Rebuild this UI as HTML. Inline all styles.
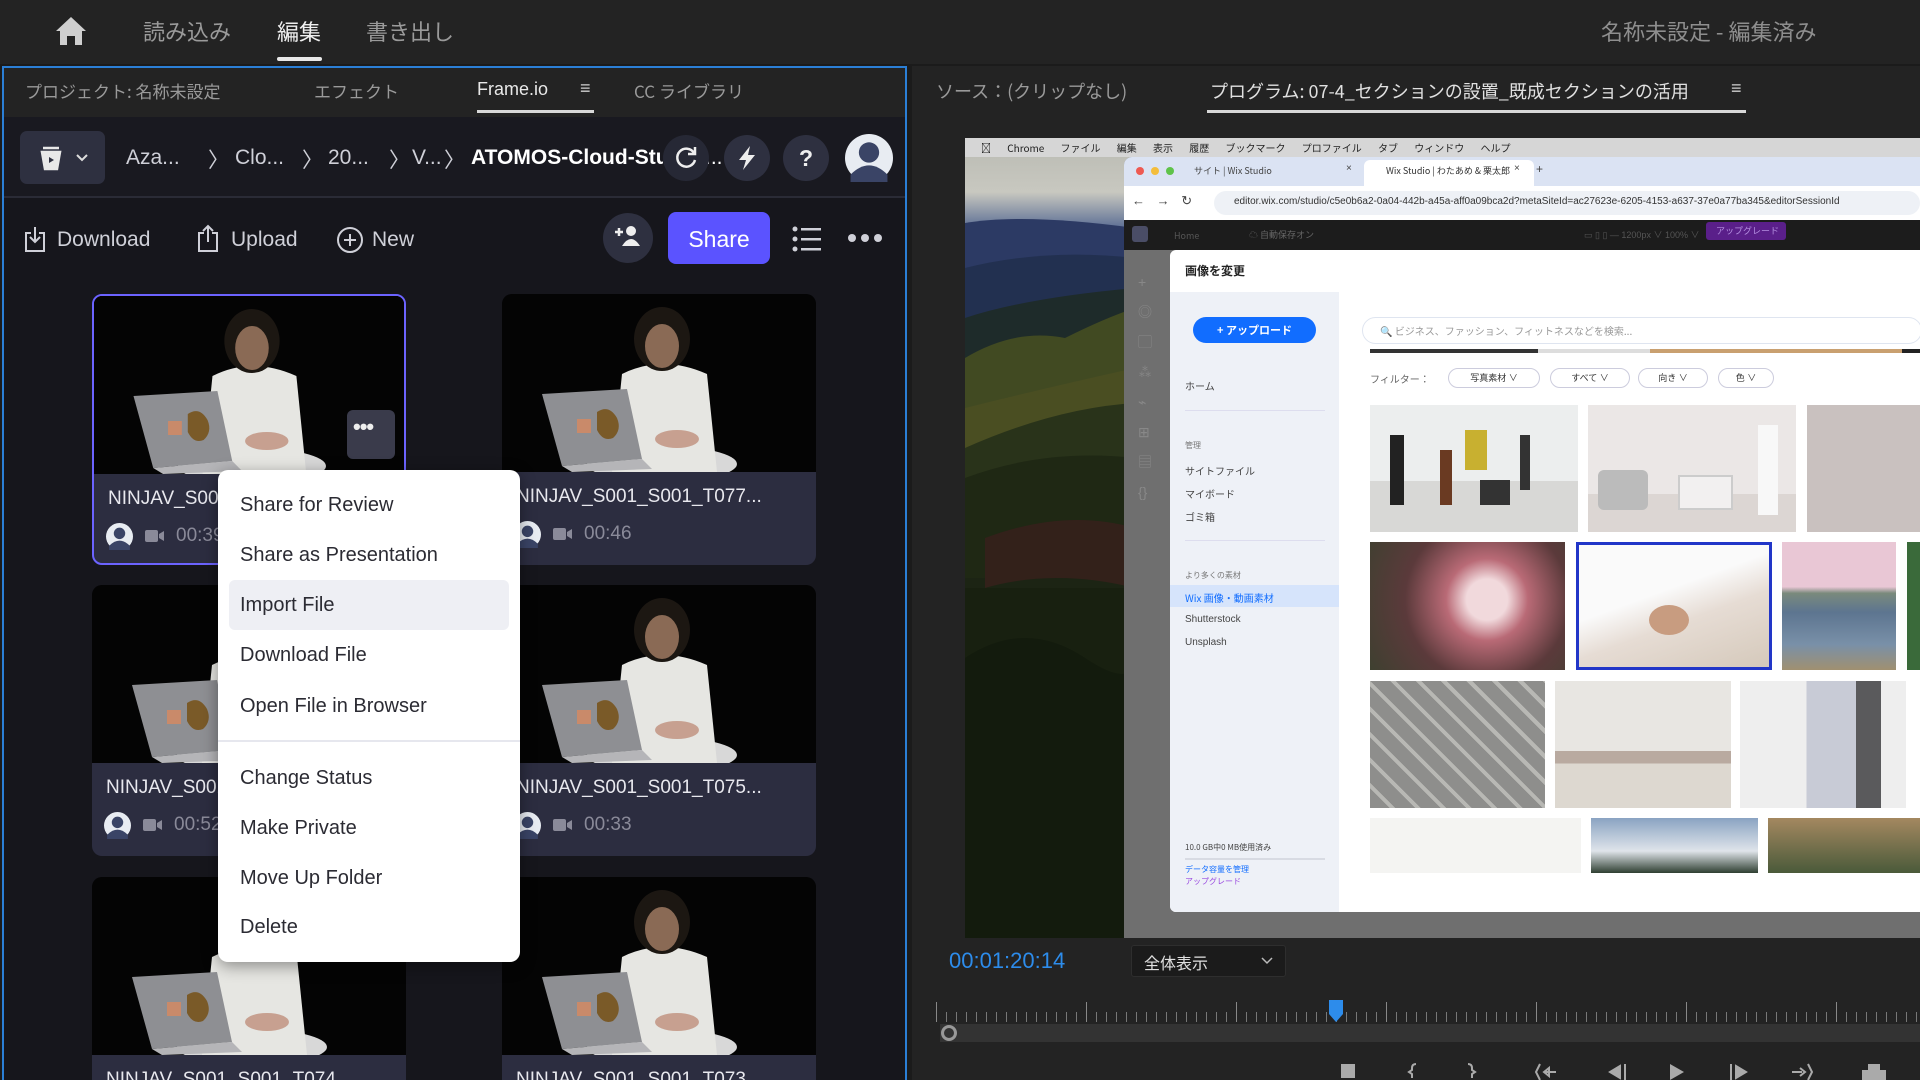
<!DOCTYPE html>
<html><head><meta charset="utf-8">
<style>
*{margin:0;padding:0;box-sizing:border-box}
html,body{width:1920px;height:1080px;overflow:hidden}
body{background:#1b1b1b;font-family:"Liberation Sans","Noto Sans CJK JP",sans-serif;position:relative}
.a{position:absolute}
.t{position:absolute;white-space:nowrap}
.jp{font-family:"Noto Sans CJK JP","Liberation Sans",sans-serif}
.card{position:absolute;width:314px;height:271px;border-radius:10px;overflow:hidden;background:#2c2d40}
.card .th{position:absolute;left:0;top:0;width:100%;height:178px;background:#050505}
.card .nm{position:absolute;left:14px;top:192px;font-size:19px;color:#e8e8ee;white-space:nowrap}
.mi{position:absolute;left:22px;font-size:20px;color:#2b2b33;white-space:nowrap}
.circ{position:absolute;width:46px;height:46px;border-radius:50%;background:#2e3040}
.img{position:absolute}
.side{position:absolute;left:15px;font-size:10px;color:#444;white-space:nowrap}
</style></head><body>
<svg width="0" height="0" style="position:absolute">
<defs>
<symbol id="th" viewBox="0 0 314 178">
<rect width="314" height="178" fill="#040404"/>
<ellipse cx="160" cy="170" rx="75" ry="18" fill="#d8d8d8"/>
<path d="M110 178 L120 80 Q160 60 205 80 L215 178 Z" fill="#e6e6e2"/>
<ellipse cx="160" cy="45" rx="28" ry="32" fill="#1c1712"/>
<ellipse cx="160" cy="52" rx="17" ry="22" fill="#8a6a55"/>
<path d="M40 100 L125 95 L140 165 L60 172 Z" fill="#8e8f93"/>
<path d="M60 172 L140 165 L150 175 L70 178 Z" fill="#b5b5b8"/>
<rect x="75" y="125" width="14" height="14" fill="#c98a6a"/>
<path d="M95 118 q12 -8 20 6 q5 12 -4 20 q-10 4 -16 -8 z" fill="#7a5a28"/>
<ellipse cx="175" cy="145" rx="22" ry="9" fill="#c7a090"/>
</symbol>
<symbol id="av" viewBox="0 0 26 26">
<circle cx="13" cy="13" r="13" fill="#e8ecf2"/>
<circle cx="13" cy="10" r="5.5" fill="#3a4466"/>
<path d="M3 22 q10 -10 20 0 v4 h-20z" fill="#3a4466"/>
</symbol>
<symbol id="cam" viewBox="0 0 20 14"><rect x="0" y="1" width="13" height="12" rx="2" fill="#8a8a99"/><path d="M14 5 L19 2 V12 L14 9Z" fill="#8a8a99"/></symbol>
</defs></svg>

<div class="a" style="left:0;top:0;width:1920px;height:64px;background:#232323"></div>
<svg class="a" style="left:55px;top:16px" width="32" height="30" viewBox="0 0 32 30"><path d="M16 1 L31 15 H27 V29 H20 V20 H12 V29 H5 V15 H1 Z" fill="#cfcfcf"/></svg>
<div class="t jp" style="left:143px;top:15px;font-size:22px;color:#9a9a9a">読み込み</div>
<div class="t jp" style="left:277px;top:15px;font-size:22px;color:#f0f0f0">編集</div>
<div class="a" style="left:277px;top:57px;width:45px;height:4px;background:#e8e8e8;border-radius:2px"></div>
<div class="t jp" style="left:366px;top:15px;font-size:22px;color:#9a9a9a">書き出し</div>
<div class="t jp" style="left:1601px;top:15px;font-size:22px;color:#8e8e8e">名称未設定 - 編集済み</div>

<div class="a" style="left:2px;top:66px;width:905px;height:1014px;background:#16161c;border:2px solid #2b7fd6;border-bottom:none;overflow:hidden">
<div class="a" style="left:0;top:0;width:901px;height:49px;background:#232323"></div>
<div class="t jp" style="left:21px;top:10px;font-size:17px;color:#9a9a9a">プロジェクト: 名称未設定</div>
<div class="t jp" style="left:310px;top:10px;font-size:17px;color:#9a9a9a">エフェクト</div>
<div class="t" style="left:473px;top:11px;font-size:18px;color:#e8e8e8">Frame.io</div>
<div class="t" style="left:576px;top:10px;font-size:18px;color:#cfcfcf">≡</div>
<div class="a" style="left:473px;top:42px;width:117px;height:3px;background:#d8d8d8"></div>
<div class="t jp" style="left:630px;top:10px;font-size:17px;color:#9a9a9a">CC ライブラリ</div>

<div class="a" style="left:0;top:49px;width:901px;height:80px;background:#191920"></div>
<div class="a" style="left:16px;top:63px;width:85px;height:53px;background:#2e3040;border-radius:7px"></div>
<svg class="a" style="left:36px;top:77px" width="50" height="26" viewBox="0 0 50 26"><path d="M3 3 h16 M2 7 h18 L17 24 h-12 Z" stroke="#e8e8e8" stroke-width="2.5" fill="#e8e8e8"/><path d="M9 12 l5 3 l-5 3z" fill="#2e3040"/><path d="M37 10 l5 5 l5 -5" stroke="#ddd" stroke-width="2" fill="none"/></svg>
<div class="t" style="left:122px;top:78px;font-size:21px;color:#cfd0d8">Aza...</div>
<div class="t" style="left:204px;top:76px;font-size:21px;color:#cfd0d8">〉</div>
<div class="t" style="left:231px;top:78px;font-size:21px;color:#cfd0d8">Clo...</div>
<div class="t" style="left:298px;top:76px;font-size:21px;color:#cfd0d8">〉</div>
<div class="t" style="left:324px;top:78px;font-size:21px;color:#cfd0d8">20...</div>
<div class="t" style="left:385px;top:76px;font-size:21px;color:#cfd0d8">〉</div>
<div class="t" style="left:408px;top:78px;font-size:21px;color:#cfd0d8">V...</div>
<div class="t" style="left:440px;top:76px;font-size:21px;color:#cfd0d8">〉</div>
<div class="t" style="left:467px;top:78px;font-size:21px;color:#fff;font-weight:bold;width:192px;overflow:hidden">ATOMOS-Cloud-Studio</div>
<div class="t" style="left:701px;top:78px;font-size:21px;color:#fff">...</div>
<div class="circ" style="left:659px;top:67px;background:#262835"></div>
<svg class="a" style="left:669px;top:77px" width="26" height="26" viewBox="0 0 26 26"><path d="M21 8 A9 9 0 1 0 22 15" stroke="#eee" stroke-width="2.5" fill="none"/><path d="M22 2 v7 h-7" stroke="#eee" stroke-width="2.5" fill="none"/></svg>
<div class="circ" style="left:720px;top:67px"></div>
<svg class="a" style="left:731px;top:77px" width="24" height="26" viewBox="0 0 24 26"><path d="M15 1 L4 15 H11 L8 25 L20 10 H13 Z" fill="#eee"/></svg>
<div class="circ" style="left:779px;top:67px"></div>
<div class="t" style="left:795px;top:77px;font-size:23px;color:#eee;font-weight:bold">?</div>
<svg class="a" style="left:841px;top:66px" width="48" height="48" viewBox="0 0 26 26"><use href="#av"/></svg>
<div class="a" style="left:0;top:128px;width:901px;height:2px;background:#2a2b36"></div>

<svg class="a" style="left:19px;top:157px" width="24" height="28" viewBox="0 0 24 28"><path d="M8 8 H3 V26 H21 V8 H16 M12 2 V17 M7 12 l5 5 l5 -5" stroke="#cfd0d8" stroke-width="2" fill="none"/></svg>
<div class="t" style="left:53px;top:160px;font-size:21px;color:#cfd0d8">Download</div>
<svg class="a" style="left:192px;top:155px" width="24" height="30" viewBox="0 0 24 30"><path d="M8 10 H3 V28 H21 V10 H16 M12 19 V3 M7 8 l5 -5 l5 5" stroke="#cfd0d8" stroke-width="2" fill="none"/></svg>
<div class="t" style="left:227px;top:160px;font-size:21px;color:#cfd0d8">Upload</div>
<svg class="a" style="left:332px;top:158px" width="28" height="28" viewBox="0 0 28 28"><circle cx="14" cy="14" r="12" stroke="#cfd0d8" stroke-width="2" fill="none"/><path d="M14 8 V20 M8 14 H20" stroke="#cfd0d8" stroke-width="2"/></svg>
<div class="t" style="left:368px;top:160px;font-size:21px;color:#cfd0d8">New</div>
<div class="a" style="left:599px;top:145px;width:50px;height:50px;border-radius:50%;background:#2e3040"></div>
<svg class="a" style="left:609px;top:154px" width="30" height="30" viewBox="0 0 30 30"><circle cx="18" cy="9" r="5" fill="#eee"/><path d="M9 24 q9 -14 18 0z" fill="#eee"/><path d="M6 6 V14 M2 10 H10" stroke="#eee" stroke-width="2.5"/></svg>
<div class="a" style="left:664px;top:144px;width:102px;height:52px;border-radius:8px;background:#5b53ff"></div>
<div class="t" style="left:664px;top:158px;width:102px;text-align:center;font-size:23px;color:#fff">Share</div>
<svg class="a" style="left:788px;top:158px" width="30" height="26" viewBox="0 0 30 26"><g fill="#cfd0d8"><circle cx="3" cy="3" r="2.5"/><circle cx="3" cy="13" r="2.5"/><circle cx="3" cy="23" r="2.5"/><rect x="9" y="2" width="20" height="2.5"/><rect x="9" y="12" width="20" height="2.5"/><rect x="9" y="22" width="20" height="2.5"/></g></svg>
<svg class="a" style="left:844px;top:165px" width="34" height="10" viewBox="0 0 34 10"><g fill="#cfd0d8"><circle cx="4" cy="5" r="4"/><circle cx="17" cy="5" r="4"/><circle cx="30" cy="5" r="4"/></g></svg>

<div class="card" style="left:88px;top:226px;border:2px solid #6c63ff"><svg class="th" viewBox="0 0 314 178" preserveAspectRatio="none"><use href="#th"/></svg><div class="nm">NINJAV_S001_S001_T078...</div><svg class="a" style="left:12px;top:227px" width="27" height="27"><use href="#av"/></svg><svg class="a" style="left:51px;top:233px" width="20" height="14"><use href="#cam"/></svg><div class="t" style="left:82px;top:229px;font-size:19px;color:#8a8a99">00:39</div>
<div class="a" style="left:253px;top:114px;width:48px;height:49px;background:#3a3b4b;border-radius:6px"></div><div class="t" style="left:259px;top:118px;font-size:22px;color:#eee;font-weight:bold;letter-spacing:-1px">•••</div></div>
<div class="card" style="left:498px;top:226px"><svg class="th" viewBox="0 0 314 178" preserveAspectRatio="none"><use href="#th"/></svg><div class="nm">NINJAV_S001_S001_T077...</div><svg class="a" style="left:12px;top:227px" width="27" height="27"><use href="#av"/></svg><svg class="a" style="left:51px;top:233px" width="20" height="14"><use href="#cam"/></svg><div class="t" style="left:82px;top:229px;font-size:19px;color:#8a8a99">00:46</div></div>
<div class="card" style="left:88px;top:517px"><svg class="th" viewBox="0 0 314 178" preserveAspectRatio="none"><use href="#th"/></svg><div class="nm">NINJAV_S001_S001_T076...</div><svg class="a" style="left:12px;top:227px" width="27" height="27"><use href="#av"/></svg><svg class="a" style="left:51px;top:233px" width="20" height="14"><use href="#cam"/></svg><div class="t" style="left:82px;top:229px;font-size:19px;color:#8a8a99">00:52</div></div>
<div class="card" style="left:498px;top:517px"><svg class="th" viewBox="0 0 314 178" preserveAspectRatio="none"><use href="#th"/></svg><div class="nm">NINJAV_S001_S001_T075...</div><svg class="a" style="left:12px;top:227px" width="27" height="27"><use href="#av"/></svg><svg class="a" style="left:51px;top:233px" width="20" height="14"><use href="#cam"/></svg><div class="t" style="left:82px;top:229px;font-size:19px;color:#8a8a99">00:33</div></div>
<div class="card" style="left:88px;top:809px;height:205px;border-radius:10px 10px 0 0"><svg class="th" viewBox="0 0 314 178" preserveAspectRatio="none"><use href="#th"/></svg><div class="nm">NINJAV_S001_S001_T074...</div></div>
<div class="card" style="left:498px;top:809px;height:205px;border-radius:10px 10px 0 0"><svg class="th" viewBox="0 0 314 178" preserveAspectRatio="none"><use href="#th"/></svg><div class="nm">NINJAV_S001_S001_T073...</div></div>
</div>

<div class="a" style="left:218px;top:470px;width:302px;height:492px;background:#fff;border-radius:10px;box-shadow:0 4px 16px rgba(0,0,0,.4)">
<div class="a" style="left:11px;top:110px;width:280px;height:50px;background:#eeeff4;border-radius:6px"></div>
<div class="mi" style="top:24px">Share for Review</div>
<div class="mi" style="top:74px">Share as Presentation</div>
<div class="mi" style="top:124px">Import File</div>
<div class="mi" style="top:174px">Download File</div>
<div class="mi" style="top:225px">Open File in Browser</div>
<div class="a" style="left:0;top:270px;width:302px;height:2px;background:#e6e7ee"></div>
<div class="mi" style="top:297px">Change Status</div>
<div class="mi" style="top:347px">Make Private</div>
<div class="mi" style="top:397px">Move Up Folder</div>
<div class="mi" style="top:446px">Delete</div>
</div>

<div class="a" style="left:912px;top:66px;width:1008px;height:1014px;background:#232323"></div>
<div class="t jp" style="left:936px;top:78px;font-size:18px;color:#9a9a9a">ソース：(クリップなし)</div>
<div class="t jp" style="left:1210px;top:78px;font-size:18px;color:#e0e0e0">プログラム:  07-4_セクションの設置_既成セクションの活用</div>
<div class="t" style="left:1731px;top:78px;font-size:18px;color:#cfcfcf">≡</div>
<div class="a" style="left:1207px;top:110px;width:539px;height:3px;background:#d8d8d8"></div>

<div class="a" style="left:965px;top:138px;width:955px;height:800px;overflow:hidden;background:#111">
 <svg class="a" style="left:0;top:0" width="170" height="800" viewBox="0 0 170 800">
  <defs><linearGradient id="sky" x1="0" y1="0" x2="0" y2="1"><stop offset="0" stop-color="#b9bab2"/><stop offset=".6" stop-color="#c8c8c0"/><stop offset="1" stop-color="#5d6f95"/></linearGradient></defs>
  <rect width="170" height="800" fill="#1c2414"/>
  <rect width="170" height="90" fill="url(#sky)"/>
  <path d="M0 85 Q60 75 170 90 V200 H0Z" fill="#2c3a64"/>
  <path d="M0 130 Q80 110 170 120 V260 H0Z" fill="#223050"/>
  <path d="M0 180 Q60 160 170 150 V330 H0Z" fill="#1e2b2a"/>
  <path d="M0 220 Q50 190 100 200 Q140 180 170 170 V330 H0Z" fill="#414a22"/>
  <path d="M0 270 Q80 250 170 230 V330 H0Z" fill="#4a4e22"/>
  <path d="M0 310 Q90 270 170 265 V370 H0Z" fill="#29331a"/>
  <path d="M0 340 Q80 310 170 320 V440 H0Z" fill="#1f2814"/>
  <path d="M20 400 Q100 370 170 390 V450 Q90 430 20 450Z" fill="#33211a"/>
  <rect y="450" width="170" height="350" fill="#182010"/>
  <path d="M0 520 Q60 480 120 520 T170 500 V800 H0Z" fill="#131b0d"/>
 </svg>
 <div class="a" style="left:0;top:0;width:955px;height:19px;background:#d6d6d6"></div>
 <div class="t jp" style="left:16px;top:2px;font-size:10px;color:#222;word-spacing:14px">&#63743; Chrome ファイル 編集 表示 履歴 ブックマーク プロファイル タブ ウィンドウ ヘルプ</div>
 <div class="a" style="left:159px;top:19px;width:796px;height:781px;background:#6f6f6f;border-radius:8px 0 0 0;overflow:hidden">
  <div class="a" style="left:0;top:0;width:796px;height:29px;background:#dbe3f3"></div>
  <div class="a" style="left:12px;top:10px;width:8px;height:8px;border-radius:50%;background:#ee5a52"></div>
  <div class="a" style="left:27px;top:10px;width:8px;height:8px;border-radius:50%;background:#f4bd3b"></div>
  <div class="a" style="left:42px;top:10px;width:8px;height:8px;border-radius:50%;background:#5fc34a"></div>
  <div class="t jp" style="left:70px;top:7px;font-size:9px;color:#444">サイト | Wix Studio</div>
  <div class="t" style="left:222px;top:6px;font-size:10px;color:#444">×</div>
  <div class="a" style="left:240px;top:3px;width:170px;height:26px;background:#fff;border-radius:6px 6px 0 0"></div>
  <div class="t jp" style="left:262px;top:7px;font-size:9px;color:#333">Wix Studio | わたあめ &amp; 栗太郎</div>
  <div class="t" style="left:390px;top:6px;font-size:10px;color:#444">×</div>
  <div class="t" style="left:412px;top:5px;font-size:12px;color:#444">+</div>
  <div class="a" style="left:0;top:29px;width:796px;height:34px;background:#fff"></div>
  <div class="t" style="left:8px;top:36px;font-size:13px;color:#444;word-spacing:8px">← → ↻</div>
  <div class="a" style="left:90px;top:34px;width:706px;height:24px;background:#eef1f6;border-radius:12px"></div>
  <div class="t" style="left:110px;top:39px;font-size:10px;color:#333">editor.wix.com/studio/c5e0b6a2-0a04-442b-a45a-aff0a09bca2d?metaSiteId=ac27623e-6205-4153-a637-37e0a77ba345&amp;editorSessionId</div>
  <div class="a" style="left:0;top:63px;width:796px;height:30px;background:#1c1c1c"></div>
  <div class="a" style="left:8px;top:69px;width:16px;height:16px;border-radius:3px;background:#4a4d66"></div>
  <div class="t jp" style="left:50px;top:72px;font-size:9px;color:#555">Home</div>
  <div class="t jp" style="left:125px;top:71px;font-size:9px;color:#666">☁ 自動保存オン</div>
  <div class="t" style="left:460px;top:71px;font-size:9px;color:#555">▭ ▯ ▯ — 1200px ∨ 100% ∨</div>
  <div class="a" style="left:582px;top:65px;width:80px;height:18px;background:#5a1f8a;border-radius:3px"></div>
  <div class="t jp" style="left:592px;top:67px;font-size:9px;color:#b48ee0">アップグレード</div>
  <div class="t" style="left:14px;top:110px;font-size:14px;color:#888;line-height:30px">+<br>◎<br>▢<br>⁂<br>⌁<br>⊞<br>▤<br>{}</div>
  <div class="a" style="left:46px;top:93px;width:750px;height:662px;background:#fff;border-radius:6px 0 0 6px;overflow:hidden">
   <div class="t jp" style="left:15px;top:12px;font-size:12px;color:#222;font-weight:bold">画像を変更</div>
   <div class="a" style="left:0;top:42px;width:169px;height:620px;background:#eef1f7"></div>
   <div class="a" style="left:23px;top:67px;width:123px;height:26px;background:#116dff;border-radius:13px"></div>
   <div class="t jp" style="left:23px;top:72px;width:123px;text-align:center;font-size:11px;color:#fff;font-weight:bold">+ アップロード</div>
   <div class="side jp" style="top:128px">ホーム</div>
   <div class="a" style="left:15px;top:160px;width:140px;height:1px;background:#dde"></div>
   <div class="side jp" style="top:190px;font-size:8px;color:#777">管理</div>
   <div class="side jp" style="top:213px">サイトファイル</div>
   <div class="side jp" style="top:236px">マイボード</div>
   <div class="side jp" style="top:259px">ゴミ箱</div>
   <div class="a" style="left:15px;top:290px;width:140px;height:1px;background:#dde"></div>
   <div class="side jp" style="top:320px;font-size:8px;color:#777">より多くの素材</div>
   <div class="a" style="left:0;top:335px;width:169px;height:22px;background:#d6e4fb"></div>
   <div class="side jp" style="top:340px;color:#116dff">Wix 画像・動画素材</div>
   <div class="side" style="top:364px">Shutterstock</div>
   <div class="side" style="top:387px">Unsplash</div>
   <div class="side jp" style="top:592px;font-size:8px">10.0 GB中0 MB使用済み</div>
   <div class="a" style="left:15px;top:608px;width:140px;height:2px;background:#d8dbe3"></div>
   <div class="side jp" style="top:614px;font-size:8px;color:#116dff">データ容量を管理</div>
   <div class="side jp" style="top:626px;font-size:8px;color:#9a4be0">アップグレード</div>
   <div class="a" style="left:192px;top:67px;width:560px;height:27px;border:1px solid #dfe5f0;border-radius:14px"></div>
   <div class="t jp" style="left:210px;top:73px;font-size:10px;color:#999">🔍 ビジネス、ファッション、フィットネスなどを検索...</div>
   <div class="a" style="left:200px;top:99px;width:560px;height:4px;background:linear-gradient(90deg,#333 0 30%,#ddd 30% 50%,#c9a070 50% 95%,#222 95%)"></div>
   <div class="t jp" style="left:200px;top:121px;font-size:10px;color:#666">フィルター：</div>
   <div class="a" style="left:278px;top:118px;width:92px;height:20px;border:1px solid #ccd;border-radius:10px;font-size:9px;color:#333;text-align:center;line-height:18px">写真素材 ∨</div>
   <div class="a" style="left:380px;top:118px;width:80px;height:20px;border:1px solid #ccd;border-radius:10px;font-size:9px;color:#333;text-align:center;line-height:18px">すべて ∨</div>
   <div class="a" style="left:468px;top:118px;width:70px;height:20px;border:1px solid #ccd;border-radius:10px;font-size:9px;color:#333;text-align:center;line-height:18px">向き ∨</div>
   <div class="a" style="left:548px;top:118px;width:56px;height:20px;border:1px solid #ccd;border-radius:10px;font-size:9px;color:#333;text-align:center;line-height:18px">色 ∨</div>
   <div class="img" style="left:200px;top:155px;width:208px;height:127px;background:linear-gradient(180deg,#eceeee 0 60%,#d8d8d6 60%)"><div class="a" style="left:20px;top:30px;width:14px;height:70px;background:#222"></div><div class="a" style="left:70px;top:45px;width:12px;height:55px;background:#6a3a22"></div><div class="a" style="left:95px;top:25px;width:22px;height:40px;background:#c8b030"></div><div class="a" style="left:110px;top:75px;width:30px;height:25px;background:#333"></div><div class="a" style="left:150px;top:30px;width:10px;height:55px;background:#333"></div></div>
   <div class="img" style="left:418px;top:155px;width:208px;height:127px;background:linear-gradient(180deg,#ebe7e6 0 70%,#dcd6d3 70%)"><div class="a" style="left:10px;top:65px;width:50px;height:40px;background:#bbb;border-radius:6px"></div><div class="a" style="left:90px;top:70px;width:55px;height:35px;background:#f2f0f0;border:2px solid #ccc"></div><div class="a" style="left:170px;top:20px;width:20px;height:90px;background:#f8f8f8"></div></div>
   <div class="img" style="left:637px;top:155px;width:120px;height:127px;background:#c9c1bf"></div>
   <div class="img" style="left:200px;top:292px;width:195px;height:128px;background:radial-gradient(circle at 60% 45%,#f1d9dc 0 15%,#b96a76 30%,#5b3a3b 60%,#3e4030)"></div>
   <div class="img" style="left:406px;top:292px;width:196px;height:128px;background:linear-gradient(160deg,#fafafa 0 40%,#e6dcd4 60%,#d5c9bb);border:3px solid #2236c8"><div class="a" style="left:70px;top:60px;width:40px;height:30px;background:#c89c80;border-radius:50%"></div></div>
   <div class="img" style="left:612px;top:292px;width:114px;height:128px;background:linear-gradient(180deg,#e9c7d5 0 35%,#7a8a7c 40%,#5d7590 55%,#7990a8 80%,#a09070)"></div>
   <div class="img" style="left:737px;top:292px;width:20px;height:128px;background:#3a6a3a"></div>
   <div class="img" style="left:200px;top:431px;width:175px;height:127px;background:repeating-linear-gradient(45deg,#8e8e8c 0 14px,#b8b8b4 14px 18px)"></div>
   <div class="img" style="left:385px;top:431px;width:176px;height:127px;background:linear-gradient(180deg,#e8e6e2 0 55%,#b9aaa0 55% 65%,#ddd8d0 65%)"></div>
   <div class="img" style="left:570px;top:431px;width:166px;height:127px;background:linear-gradient(90deg,#eee 0 40%,#c8cbd6 40% 70%,#5a5a5c 70% 85%,#eee 85%)"></div>
   <div class="img" style="left:200px;top:568px;width:211px;height:55px;background:#f4f4f2"></div>
   <div class="img" style="left:421px;top:568px;width:167px;height:55px;background:linear-gradient(180deg,#8aa3c2,#dfe4ea 60%,#2f3f32)"></div>
   <div class="img" style="left:598px;top:568px;width:152px;height:55px;background:linear-gradient(180deg,#a48860,#4a5a3a)"></div>
  </div>
 </div>
</div>

<div class="t" style="left:949px;top:948px;font-size:22px;color:#2d8ceb">00:01:20:14</div>
<div class="a" style="left:1131px;top:945px;width:155px;height:32px;background:#1b1b1b;border:1px solid #2e2e2e;border-radius:3px"></div>
<div class="t jp" style="left:1144px;top:950px;font-size:16px;color:#e0e0e0">全体表示</div>
<svg class="a" style="left:1260px;top:956px" width="14" height="10" viewBox="0 0 14 10"><path d="M2 2 l5 5 l5 -5" stroke="#bbb" stroke-width="1.5" fill="none"/></svg>
<svg class="a" style="left:936px;top:996px" width="984" height="28" viewBox="0 0 984 28">
<defs><pattern id="tk" width="10" height="28" patternUnits="userSpaceOnUse"><rect x="0" y="16" width="1" height="10" fill="#777"/></pattern><pattern id="tk2" width="150" height="28" patternUnits="userSpaceOnUse"><rect x="0" y="6" width="1" height="20" fill="#888"/></pattern></defs>
<rect x="0" width="984" height="28" fill="url(#tk)"/><rect width="984" height="28" fill="url(#tk2)"/>
<path d="M393 4 h14 v14 l-7 8 l-7 -8z" fill="#2d8ceb"/>
</svg>
<div class="a" style="left:940px;top:1024px;width:980px;height:18px;background:#333"></div>
<div class="a" style="left:941px;top:1025px;width:16px;height:16px;border-radius:50%;border:3px solid #999"></div>
<svg class="a" style="left:1330px;top:1058px" width="580" height="22" viewBox="0 0 580 22"><g fill="#aaa" stroke="#aaa">
<path d="M11 6 h14 v14 h-14z" stroke="none"/>
<path d="M86 6 q-4 0 -4 4 v2 l-3 2 l3 2 v4" fill="none" stroke-width="2"/>
<path d="M138 6 q4 0 4 4 v2 l3 2 l-3 2 v4" fill="none" stroke-width="2"/>
<path d="M210 6 l-4 8 l4 8 M214 14 h12 M214 14 l5 -4 v8z" stroke-width="2" fill="none"/>
<path d="M295 6 v16 M290 8 l-10 6 l10 6z" stroke-width="2"/>
<path d="M340 6 l14 8 l-14 8z" stroke="none"/>
<path d="M401 6 v16 M406 8 l10 6 l-10 6z" stroke-width="2"/>
<path d="M462 14 h10 M470 10 l5 4 l-5 4 M478 6 l4 8 l-4 8" stroke-width="2" fill="none"/>
<path d="M538 6 h12 v6 h6 v10 h-24 v-10 h6z" stroke="none"/>
</g></svg>
</body></html>
